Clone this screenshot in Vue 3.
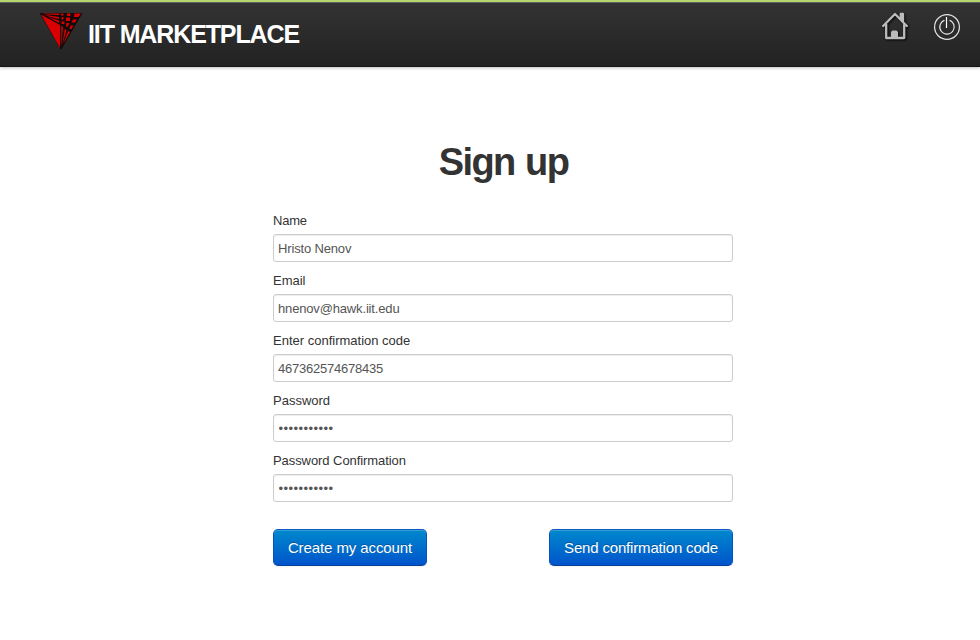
<script setup>
import { ref } from 'vue'

const fields = ref([
  { id: 'name', label: 'Name', type: 'text', value: 'Hristo Nenov' },
  { id: 'email', label: 'Email', type: 'text', value: 'hnenov@hawk.iit.edu' },
  { id: 'code', label: 'Enter confirmation code', type: 'text', value: '467362574678435' },
  { id: 'password', label: 'Password', type: 'password', value: 'marketplace' },
  { id: 'confirm', label: 'Password Confirmation', type: 'password', value: 'marketplace' }
])
</script>

<template>
  <div class="page">
    <header class="navbar">
      <a class="brand">
        <svg class="logo" width="44" height="41" viewBox="0 0 44 41">
          <path d="M.5 3H43.5L22 40Z" fill="#140808" />
          <g fill="#d80000">
            <path d="M2 4.5L21 15V38Z" />
            <path d="M3 3.5H20V5L8 4.5ZM6 5L20 7V9L10 6.5ZM9 7L20 10.5V13Z" />
            <path d="M22.3 38V16L24 17ZM23.3 35L25.8 19L27.5 20ZM24.2 34L29 21L31 22Z" />
            <path d="M22 3.5H24.5V5.5H22ZM28 3.5H31.5V6H28ZM35.5 3.5H42L39.5 7H35Z" />
            <path d="M22.5 7H24.5V9.5H22.5ZM27 7.5H31V11H27ZM34 9.5H37.8L36 12.5H32.5Z" />
            <path d="M22.5 11.5H25.5V14H22.5ZM27.3 13H30.3L29 16.5H27ZM31.5 15.5H34.5L32.5 19H30.5Z" />
          </g>
        </svg>
        <span class="brand-name">IIT MARKETPLACE</span>
      </a>
      <nav class="actions">
        <svg class="home" width="28" height="29" viewBox="0 0 28 29">
          <path d="M2.2 15L14 3L25.8 15M5.2 13.5V27H23.2V13.5M19.8 8V3H22V10" fill="none" stroke="#bbb" stroke-width="2.3" stroke-linejoin="round" stroke-linecap="round" />
          <path d="M10 27V21L11.5 19.5H15.5L17 21V27Z" fill="#bbb" />
        </svg>
        <svg class="power" width="28" height="28" viewBox="0 0 28 28">
          <g fill="none" stroke="#e4e4e4">
            <circle cx="14" cy="14" r="12.4" stroke-width="1.2" />
            <path d="M11.5 7.2A7.2 7.2 0 1 0 16.5 7.2" stroke-width="1.2" />
            <path d="M13.5 4V15" stroke="#fff" stroke-width="1.2" />
          </g>
        </svg>
      </nav>
    </header>

    <main class="signup">
      <h1>Sign up</h1>
      <form @submit.prevent>
        <div v-for="f in fields" :key="f.id" class="field">
          <label :for="f.id" :class="'label-' + f.id">{{ f.label }}</label>
          <input :id="f.id" v-model="f.value" :type="f.type" autocomplete="off" />
        </div>
        <div class="buttons">
          <button class="create" type="submit">Create my account</button>
          <button class="send" type="button">Send confirmation code</button>
        </div>
      </form>
    </main>
  </div>
</template>

<style>
body {
  margin: 0;
  background: #fff;
}
</style>

<style scoped>
.page {
  height: 640px;
  overflow: hidden;
  font-family: "Liberation Sans", Arial, sans-serif;
  font-size: 13px;
  color: #333;
}
.navbar {
  box-sizing: border-box;
  height: 67px;
  padding: 0 19px 0 39px;
  display: flex;
  justify-content: space-between;
  align-items: flex-start;
  border-top: 2px solid #b4d46c;
  background: linear-gradient(#333, #222);
  box-shadow: 0 1px 3px rgba(0, 0, 0, .25), inset 0 1px #606060, inset 0 -1px #151515;
}
.brand {
  display: flex;
}
.logo {
  margin-top: 8px;
}
.brand-name {
  margin: 18px 0 0 5px;
  font-size: 25px;
  font-weight: bold;
  line-height: 28px;
  letter-spacing: -1.12px;
  color: #fff;
  white-space: nowrap;
}
.actions {
  display: flex;
  gap: 24px;
  padding-top: 9px;
}
.home {
  filter: drop-shadow(1px 1px 1px #000);
}
.power {
  margin-top: 2px;
}
.signup {
  width: 460px;
  margin: 75px 0 0 273px;
}
h1 {
  margin: 0 0 30px;
  padding-left: 1px;
  font-size: 38px;
  line-height: 40px;
  letter-spacing: -1.6px;
  word-spacing: 1.5px;
  text-align: center;
}
.field {
  height: 60px;
}
label {
  display: block;
  height: 22px;
  line-height: 17px;
}
.label-name {
  letter-spacing: -.2px;
}
.label-confirm {
  letter-spacing: -.07px;
}
input {
  display: block;
  box-sizing: border-box;
  width: 460px;
  height: 28px;
  padding: 4px;
  border: 1px solid #ccc;
  border-radius: 3px;
  background: #fff;
  box-shadow: inset 0 1px 1px rgba(0, 0, 0, .075);
  font: 13px/18px "Liberation Sans", Arial, sans-serif;
  letter-spacing: -.16px;
  color: #555;
  outline: none;
}
#code {
  letter-spacing: -.23px;
}
input[type="password"] {
  padding-left: 4.5px;
  letter-spacing: .45px;
}
.buttons {
  display: flex;
  justify-content: space-between;
  padding-top: 17px;
}
button {
  box-sizing: border-box;
  height: 37px;
  padding: 0;
  border: 1px solid #04c;
  border-color: #0a5cc4 #0a50bd #083f96;
  border-radius: 5px;
  background: linear-gradient(#08c, #05c);
  box-shadow: inset 0 1px rgba(255, 255, 255, .2), 0 1px 2px rgba(0, 0, 0, .05);
  font: 15px/20px "Liberation Sans", Arial, sans-serif;
  color: #fff;
  text-shadow: 0 -1px rgba(0, 0, 0, .25);
}
.create {
  width: 154px;
  letter-spacing: -.1px;
}
.send {
  width: 184px;
  letter-spacing: -.17px;
}
</style>
